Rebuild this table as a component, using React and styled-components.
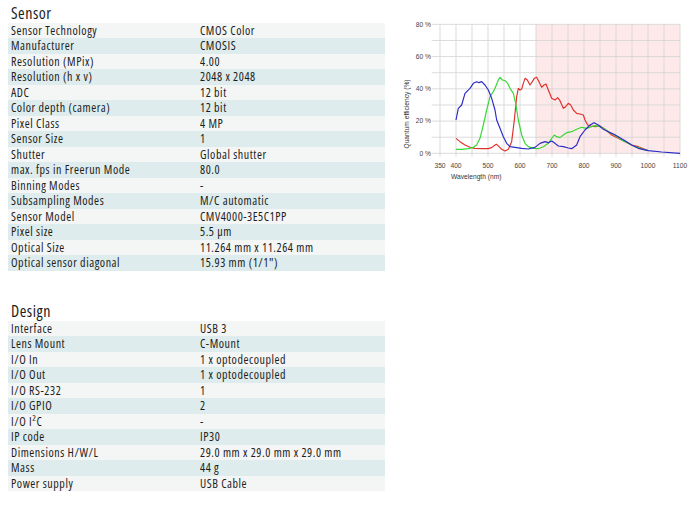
import React from "react";
import styled, { createGlobalStyle } from "styled-components";

const GlobalStyle = createGlobalStyle`
  body {
    margin: 0;
    background: #ffffff;
    font-family: "Open Sans", "Lato", sans-serif;
    color: #1d1d1b;
  }
`;

const Page = styled.div`
  width: 698px;
  height: 515px;
  display: flex;
  align-items: flex-start;
`;

const Specs = styled.div`
  width: 385px;
  padding-left: 8px;
  box-sizing: border-box;
  display: flex;
  flex-direction: column;
  gap: 27.6px;
`;

const Section = styled.section`
  display: flex;
  flex-direction: column;
`;

const Title = styled.h2`
  margin: 0;
  padding: 5px 0 0 3px;
  height: 17.7px;
  line-height: 17px;
  font-size: 16px;
  font-weight: 400;
  font-stretch: 75%;
  letter-spacing: 0.5px;
`;

const Row = styled.div`
  display: grid;
  grid-template-columns: 189px 1fr;
  padding-left: 3px;
  height: 15.5px;
  line-height: 15.5px;
  font-size: 12px;
  font-weight: 500;
  font-stretch: 75%;
  letter-spacing: 0.55px;
  background: ${(p) => (p.$alt ? "#deeced" : "#f4f5f5")};
  white-space: nowrap;
  overflow: hidden;
`;

const Chart = styled.svg`
  margin: 10px 0 0 10px;
  width: 300px;
  height: 180px;
  flex-shrink: 0;
  font-family: "Liberation Sans", Arial, sans-serif;
`;

const sensor = [
  ["Sensor Technology", "CMOS Color"],
  ["Manufacturer", "CMOSIS"],
  ["Resolution (MPix)", "4.00"],
  ["Resolution (h x v)", "2048 x 2048"],
  ["ADC", "12 bit"],
  ["Color depth (camera)", "12 bit"],
  ["Pixel Class", "4 MP"],
  ["Sensor Size", "1"],
  ["Shutter", "Global shutter"],
  ["max. fps in Freerun Mode", "80.0"],
  ["Binning Modes", "-"],
  ["Subsampling Modes", "M/C automatic"],
  ["Sensor Model", "CMV4000-3E5C1PP"],
  ["Pixel size", "5.5 µm"],
  ["Optical Size", "11.264 mm x 11.264 mm"],
  ["Optical sensor diagonal", "15.93 mm (1/1\")"],
];

const design = [
  ["Interface", "USB 3"],
  ["Lens Mount", "C-Mount"],
  ["I/O In", "1 x optodecoupled"],
  ["I/O Out", "1 x optodecoupled"],
  ["I/O RS-232", "1"],
  ["I/O GPIO", "2"],
  ["I/O I²C", "-"],
  ["IP code", "IP30"],
  ["Dimensions H/W/L", "29.0 mm x 29.0 mm x 29.0 mm"],
  ["Mass", "44 g"],
  ["Power supply", "USB Cable"],
];

// curve points in chart units (viewBox is 3x the on-screen size)
const blue = "183,330 190,295 200,285 210,250 225,235 235,220 245,215 252,218 260,215 270,225 280,240 290,265 300,300 305,330 315,355 325,380 335,400 345,410 360,412 380,415 400,417 420,412 435,400 450,395 460,398 470,393 480,400 490,408 505,410 520,414 530,416 545,405 555,380 570,360 585,345 597,338 610,345 625,358 640,365 655,372 670,380 690,392 710,405 730,415 760,422 800,426 855,430";
const green = "183,418 200,418 220,416 235,412 245,405 255,385 265,345 275,300 285,260 295,245 300,235 310,210 315,202 322,210 330,212 338,220 345,235 355,250 362,280 370,330 380,375 390,400 400,410 415,415 430,416 445,410 460,400 470,385 478,375 485,380 495,383 505,375 515,368 530,365 545,358 560,352 575,355 590,350 600,347 615,350 630,358 645,368 660,375 680,390 700,400 720,410 745,418 760,422";
const red = "183,385 195,395 210,405 225,412 240,415 260,416 280,416 290,413 300,405 305,403 312,410 320,418 330,423 340,418 350,395 358,330 365,260 370,235 375,240 380,237 385,220 390,205 397,210 405,225 412,215 418,205 425,202 432,215 440,232 447,225 453,222 460,240 470,265 480,270 488,263 495,272 505,295 512,290 520,280 527,285 535,300 545,310 555,312 565,315 570,330 578,345 588,348 600,350 615,348 630,358 650,375 670,385 690,395 710,405 730,410 755,420";

const xTicks = [350, 400, 500, 600, 700, 800, 900, 1000, 1100];
const nmX = (nm) => 135 + (nm - 350) * 0.96;
const pctY = (p) => 430 - p * 4.8375;

const QeChart = () => (
  <Chart viewBox="0 0 900 540">
    <rect x={nmX(650)} y={pctY(80)} width={nmX(1100) - nmX(650)} height={pctY(0) - pctY(80)} fill="#fde9e9" />
    {Array.from({ length: 9 }, (_, i) => (
      <line key={"h" + i} x1={110} x2={855} y1={pctY(i * 10)} y2={pctY(i * 10)} stroke="#d4d4d4" strokeWidth="2.5" />
    ))}
    {Array.from({ length: 16 }, (_, i) => (
      <line key={"v" + i} x1={nmX(350 + i * 50)} x2={nmX(350 + i * 50)} y1={pctY(80)} y2={440} stroke="#d4d4d4" strokeWidth="2.5" />
    ))}
    {[0, 20, 40, 60, 80].map((p) => (
      <text key={p} x={108} y={pctY(p) + 7} fontSize="20" fill="#444" textAnchor="end">{p} %</text>
    ))}
    {xTicks.map((nm) => (
      <text key={nm} x={nmX(nm)} y={474} fontSize="20" fill="#444" textAnchor="middle">{nm}</text>
    ))}
    <text x={168} y={506} fontSize="20" fill="#333">Wavelength (nm)</text>
    <text transform="translate(42 312) rotate(-90)" fontSize="20" fill="#333" textAnchor="middle">Quantum efficiency (%)</text>
    <polyline points={red} fill="none" stroke="#e0302b" strokeWidth="3.5" strokeLinejoin="round" />
    <polyline points={green} fill="none" stroke="#36d933" strokeWidth="3.5" strokeLinejoin="round" />
    <polyline points={blue} fill="none" stroke="#2b2bc8" strokeWidth="3.5" strokeLinejoin="round" />
  </Chart>
);

const SpecTable = ({ title, rows }) => (
  <Section>
    <Title>{title}</Title>
    {rows.map(([k, v], i) => (
      <Row key={k} $alt={i % 2 === 1}>
        <span>{k}</span>
        <span>{v}</span>
      </Row>
    ))}
  </Section>
);

export default function App() {
  return (
    <Page>
      <GlobalStyle />
      <Specs>
        <SpecTable title="Sensor" rows={sensor} />
        <SpecTable title="Design" rows={design} />
      </Specs>
      <QeChart />
    </Page>
  );
}
